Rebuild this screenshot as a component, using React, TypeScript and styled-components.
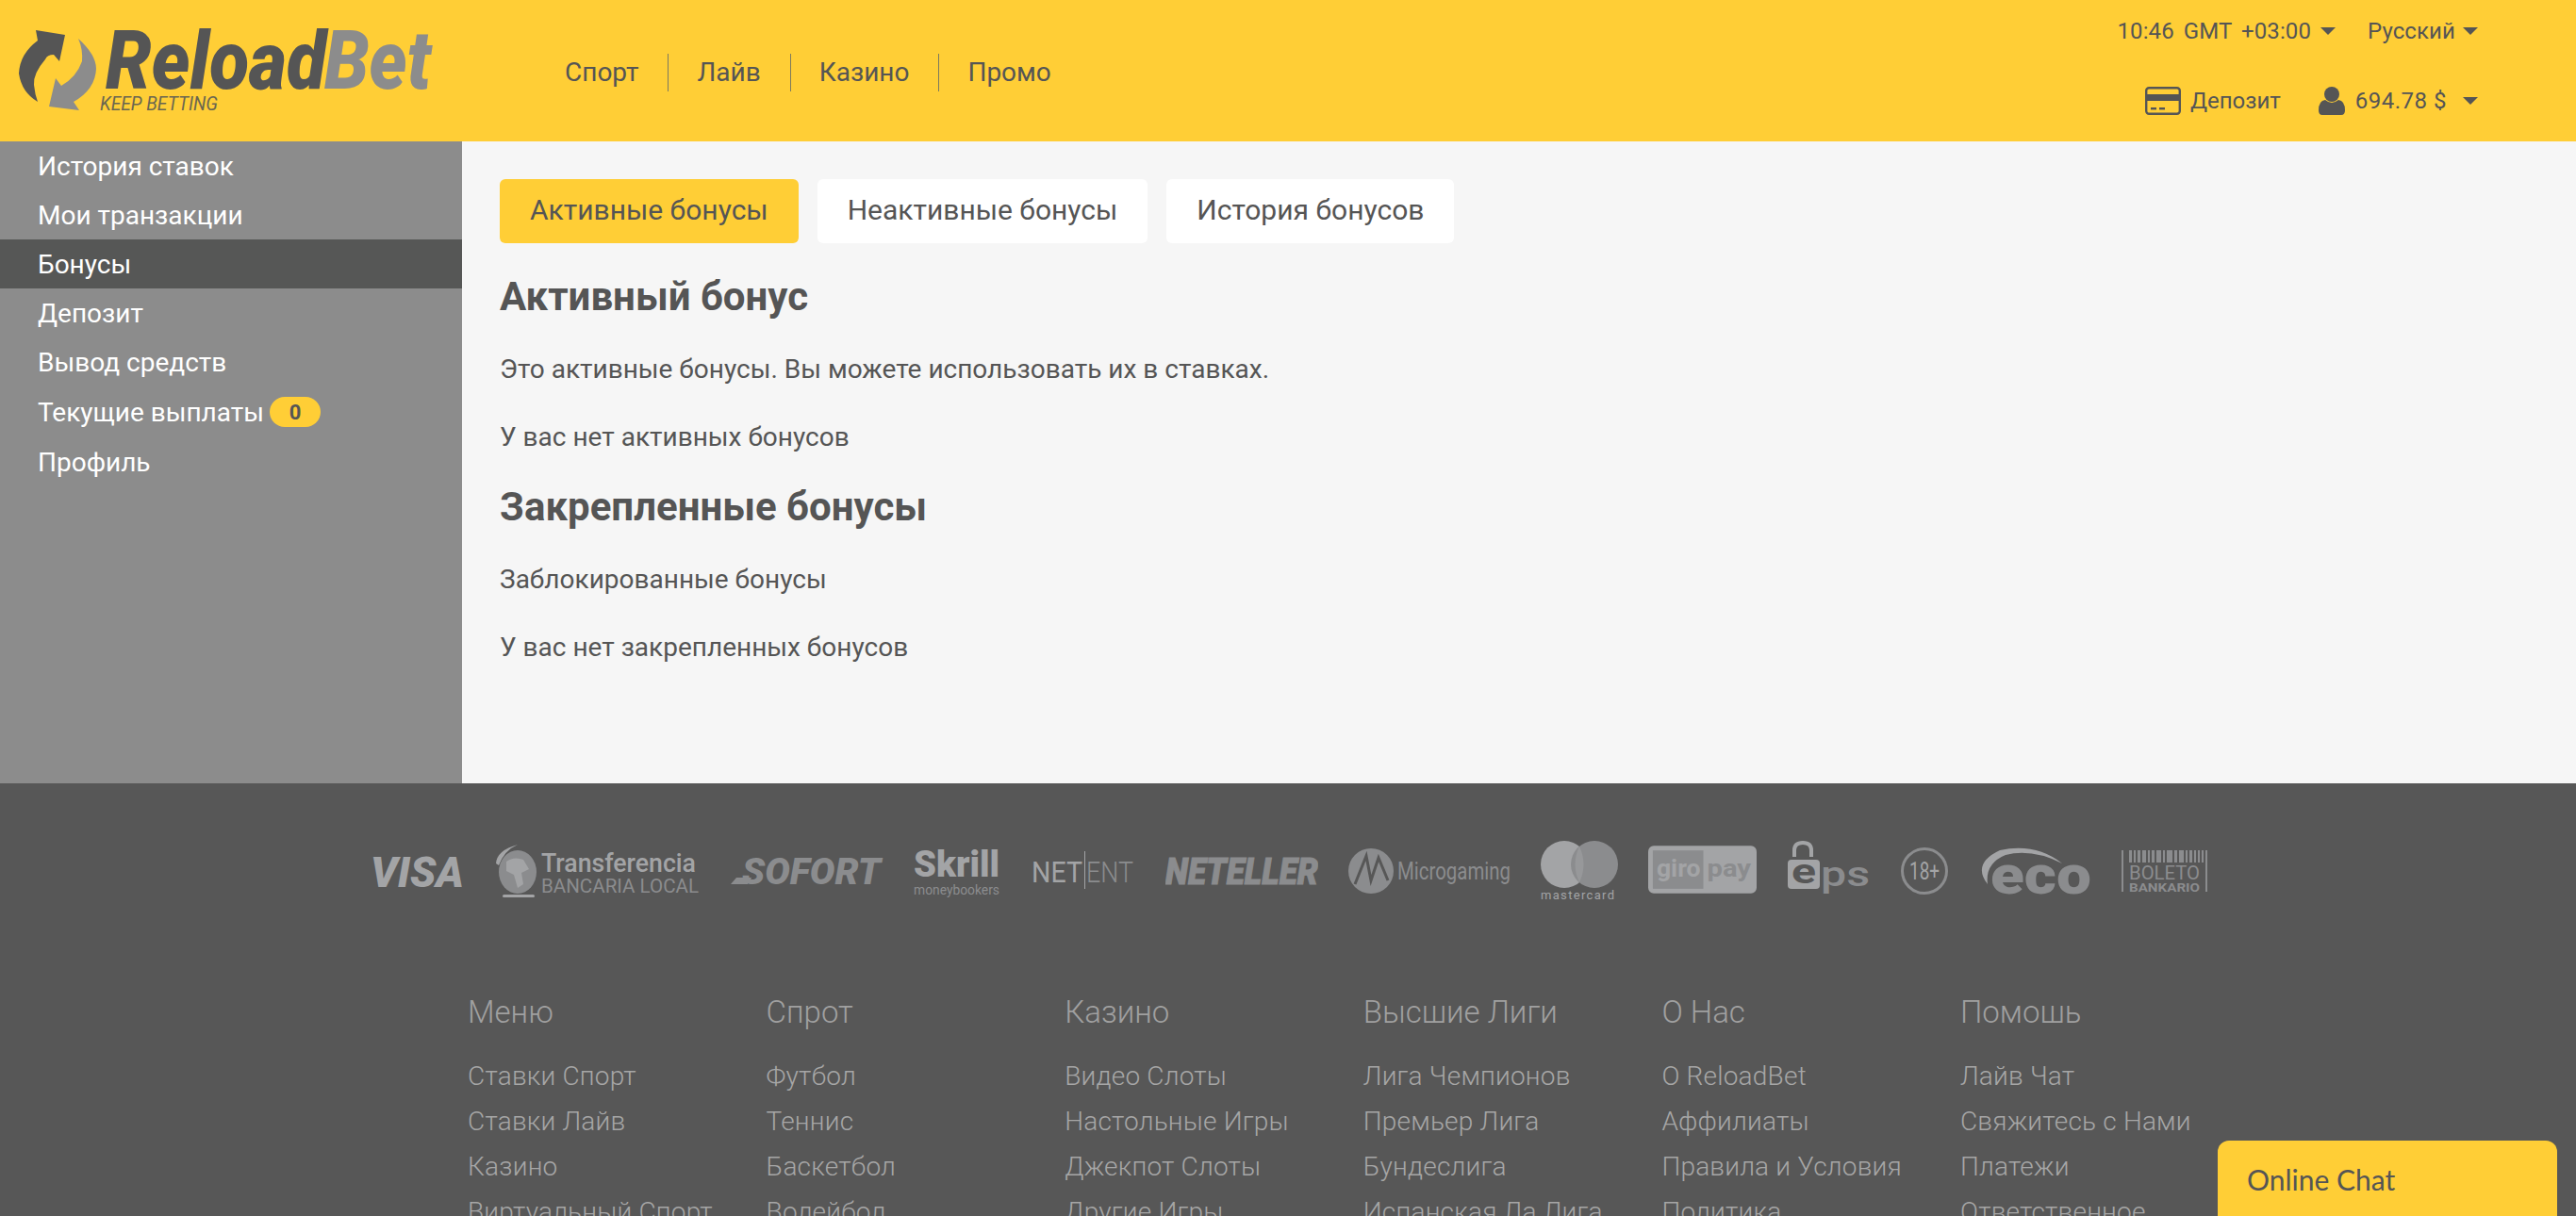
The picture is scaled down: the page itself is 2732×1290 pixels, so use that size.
import styled, { createGlobalStyle } from "styled-components";

const GlobalStyle = createGlobalStyle`
  html, body {
    margin: 0;
    height: 100%;
    overflow: hidden;
  }
  body {
    font-family: Roboto, "Noto Sans", sans-serif;
    background: #575757;
  }
  * {
    box-sizing: border-box;
  }
`;

const Page = styled.div`
  width: 2732px;
  height: 1290px;
  overflow: hidden;
  position: relative;
  display: flex;
  flex-direction: column;
`;

const Header = styled.header`
  height: 150px;
  flex: none;
  background: #ffce36;
  display: flex;
  color: #555;
`;

const LogoBox = styled.div`
  width: 599px;
  flex: none;
  padding: 30px 0 0 19px;
`;

const Nav = styled.nav`
  flex: 1;
  display: flex;
  align-items: center;
  font-size: 28px;
  height: 154px;
`;

const NavItem = styled.a`
  display: block;
  height: 40px;
  line-height: 40px;
  padding: 0 31px 0 30px;
  border-left: 1px solid #7d7a5e;
  white-space: nowrap;
  &:first-child {
    border-left: none;
    padding-left: 0;
  }
`;

const HeaderRight = styled.div`
  width: 560px;
  flex: none;
  font-size: 24px;
  padding-right: 104px;
  display: flex;
  flex-direction: column;
  align-items: flex-end;
  white-space: nowrap;
`;

const TopRow = styled.div`
  height: 66px;
  display: flex;
  align-items: center;
  letter-spacing: 0.1px;
`;

const BottomRow = styled.div`
  height: 42px;
  margin-top: 20px;
  display: flex;
  align-items: center;
`;

const Caret = styled.span<{ $gap: number }>`
  width: 0;
  height: 0;
  border-left: 8px solid transparent;
  border-right: 8px solid transparent;
  border-top: 8px solid #555;
  margin-left: ${(p) => p.$gap}px;
`;

const TimeText = styled.span`
  word-spacing: 4px;
`;

const Lang = styled.span`
  margin-left: 34px;
`;

const Deposit = styled.span`
  margin: 0 40px 0 10px;
`;

const Balance = styled.span`
  margin-left: 11px;
  letter-spacing: 0.5px;
`;

const Main = styled.div`
  height: 681px;
  flex: none;
  display: flex;
`;

const Sidebar = styled.aside`
  width: 490px;
  flex: none;
  background: #8c8c8c;
`;

const SideItem = styled.a<{ $active?: boolean }>`
  display: flex;
  align-items: center;
  min-height: 52px;
  padding-left: 40px;
  font-size: 28px;
  color: #fff;
  background: ${(p) => (p.$active ? "#565756" : "transparent")};
`;

const Badge = styled.span`
  width: 54px;
  height: 32px;
  margin: 11px 0 11px 6px;
  border-radius: 16px;
  background: #ffce36;
  color: #555;
  font-size: 22px;
  font-weight: 700;
  display: flex;
  align-items: center;
  justify-content: center;
`;

const Content = styled.main`
  flex: 1;
  background: #f6f6f6;
  padding: 40px 40px 0;
  color: #555;
`;

const Tabs = styled.div`
  display: flex;
  gap: 20px;
  margin-bottom: 34px;
`;

const Tab = styled.button<{ $active?: boolean }>`
  height: 68px;
  padding: 0 32px 3px;
  border: none;
  border-radius: 6px;
  font-family: inherit;
  font-size: 30px;
  color: #555;
  background: ${(p) => (p.$active ? "#ffce36" : "#fff")};
`;

const Heading = styled.h2`
  margin: 0;
  font-size: 42px;
  line-height: 46px;
  font-weight: 700;
`;

const Para = styled.p`
  margin: 0;
  font-size: 28px;
  line-height: 32px;
`;

const ActiveIntro = styled(Para)`
  margin-top: 38px;
`;

const ParaNext = styled(Para)`
  margin-top: 40px;
`;

const SecondHeading = styled(Heading)`
  margin-top: 35px;
`;

const Footer = styled.footer`
  flex: 1;
  background: #575757;
  padding-top: 61px;
`;

const LogoStrip = styled.div`
  display: flex;
  justify-content: center;
  gap: 32px;
  height: 64px;
`;

const LogoText = styled.text<{ $dark?: boolean }>`
  font-family: Roboto, sans-serif;
  fill: ${(p) => (p.$dark ? "#8b8c8e" : "#a3a4a6")};
`;

const Columns = styled.div`
  display: grid;
  grid-template-columns: repeat(6, 316.6px);
  padding: 99px 0 0 496px;
`;

const ColTitle = styled.div`
  font-size: 33px;
  line-height: 38px;
  font-weight: 300;
  color: #a0a0a0;
  margin-bottom: 25px;
`;

const ColLink = styled.a`
  display: block;
  font-size: 28px;
  letter-spacing: 0.2px;
  line-height: 48px;
  font-weight: 300;
  color: #a6a6a6;
  white-space: nowrap;
`;

const ChatTab = styled.div`
  position: absolute;
  left: 2352px;
  top: 1210px;
  width: 360px;
  height: 90px;
  padding: 23px 31px;
  border-radius: 12px 12px 0 0;
  background: #ffce36;
  color: #555;
  font-family: Lato, sans-serif;
  font-size: 30px;
  line-height: 36px;
`;

const Logo = () => (
  <svg width="450" height="92" viewBox="0 0 450 92">
    <path
      d="M19 2 L50 7 L44 35 L38 28 Q31 28 29 33 Q16 48 17 60 Q18 70 21 78 Q4 68 1 48 Q2 27 21 13 Z"
      fill="#555"
    />
    <path
      d="M64 11 Q83 28 83 43 Q82 65 59 78 L65 87 L33 83 L40 53 L46 61 Q62 52 68 35 Q69 22 64 11 Z"
      fill="#8c8c8c"
    />
    <text
      x="93"
      y="64"
      textLength="234"
      lengthAdjust="spacingAndGlyphs"
      fontFamily="Roboto"
      fontWeight="900"
      fontStyle="italic"
      fontSize="86"
      fill="#555"
    >
      Reload
    </text>
    <text
      x="325"
      y="64"
      textLength="113"
      lengthAdjust="spacingAndGlyphs"
      fontFamily="Roboto"
      fontWeight="900"
      fontStyle="italic"
      fontSize="86"
      fill="#8c8c8c"
    >
      Bet
    </text>
    <text
      x="87"
      y="87"
      textLength="125"
      lengthAdjust="spacingAndGlyphs"
      fontFamily="Roboto"
      fontWeight="400"
      fontStyle="italic"
      fontSize="21"
      fill="#6a6650"
    >
      KEEP BETTING
    </text>
  </svg>
);

const CardIcon = () => (
  <svg width="38" height="30" viewBox="0 0 38 30">
    <rect x="1.2" y="1.2" width="35.6" height="27.6" rx="3" fill="none" stroke="#555" strokeWidth="2.4" />
    <rect x="1" y="8" width="36" height="7" fill="#555" />
    <rect x="6" y="22" width="6" height="2.4" fill="#555" />
    <rect x="15" y="22" width="6" height="2.4" fill="#555" />
  </svg>
);

const UserIcon = () => (
  <svg width="28" height="30" viewBox="0 0 28 30">
    <circle cx="14" cy="8" r="8" fill="#555" />
    <path d="M0 25 Q0 15 7 14 Q14 20 21 14 Q28 15 28 25 Q28 30 24 30 L4 30 Q0 30 0 25 Z" fill="#555" />
  </svg>
);

const Visa = () => (
  <svg width="101" height="64" viewBox="0 0 101 64">
    <LogoText x="1" y="49" textLength="99" lengthAdjust="spacingAndGlyphs" fontSize="44" fontWeight="900" fontStyle="italic">
      VISA
    </LogoText>
  </svg>
);

const Transferencia = () => (
  <svg width="218" height="64" viewBox="0 0 218 64">
    <path d="M1 24 Q2 10 24 4 Q10 10 4 26 Z" fill="#a3a4a6" />
    <ellipse cx="24" cy="33" rx="20" ry="23" fill="#8b8c8e" />
    <path d="M12 22 Q20 16 30 20 L36 30 L28 34 L30 46 L24 50 L20 36 L12 32 Z" fill="#a3a4a6" />
    <rect x="8" y="57" width="34" height="3" rx="1.5" fill="#a3a4a6" />
    <LogoText x="49" y="33" textLength="164" lengthAdjust="spacingAndGlyphs" fontSize="28" fontWeight="500">
      Transferencia
    </LogoText>
    <LogoText $dark x="49" y="55" textLength="167" lengthAdjust="spacingAndGlyphs" fontSize="21">
      BANCARIA LOCAL
    </LogoText>
  </svg>
);

const Sofort = () => (
  <svg width="162" height="64" viewBox="0 0 162 64">
    <path d="M0 46 L6 39 H22 L18 46 Z" fill="#8b8c8e" />
    <LogoText $dark x="12" y="46" textLength="147" lengthAdjust="spacingAndGlyphs" fontSize="38" fontWeight="900" fontStyle="italic">
      SOFORT
    </LogoText>
  </svg>
);

const Skrill = () => (
  <svg width="93" height="64" viewBox="0 0 93 64">
    <LogoText x="0" y="38" textLength="91" lengthAdjust="spacingAndGlyphs" fontSize="38" fontWeight="900">
      Skrill
    </LogoText>
    <LogoText $dark x="0" y="57" textLength="91" lengthAdjust="spacingAndGlyphs" fontSize="15">
      moneybookers
    </LogoText>
  </svg>
);

const NetEnt = () => (
  <svg width="110" height="64" viewBox="0 0 110 64">
    <LogoText x="0" y="44" textLength="54" lengthAdjust="spacingAndGlyphs" fontSize="32">
      NET
    </LogoText>
    <rect x="56" y="11" width="1" height="40" fill="#a3a4a6" />
    <LogoText $dark x="58" y="44" textLength="50" lengthAdjust="spacingAndGlyphs" fontSize="32" fontWeight="300">
      ENT
    </LogoText>
  </svg>
);

const Neteller = () => (
  <svg width="162" height="64" viewBox="0 0 162 64">
    <LogoText $dark x="0" y="46" textLength="162" lengthAdjust="spacingAndGlyphs" fontSize="38" fontWeight="900" fontStyle="italic" stroke="#8b8c8e" strokeWidth="1">
      NETELLER
    </LogoText>
  </svg>
);

const Microgaming = () => (
  <svg width="172" height="64" viewBox="0 0 172 64">
    <ellipse cx="24" cy="32" rx="24" ry="24" fill="#8b8c8e" />
    <path d="M7 46 L19 16 L24 42 L32 18 L42 42" fill="none" stroke="#575757" strokeWidth="3" />
    <LogoText $dark x="52" y="41" textLength="120" lengthAdjust="spacingAndGlyphs" fontSize="25">
      Microgaming
    </LogoText>
  </svg>
);

const Mastercard = () => (
  <svg width="82" height="64" viewBox="0 0 82 64">
    <ellipse cx="25" cy="25" rx="25" ry="25" fill="#a3a4a6" />
    <ellipse cx="57" cy="25" rx="25" ry="25" fill="#8b8c8e" />
    <path d="M41 6 Q50 25 41 44 Q32 25 41 6 Z" fill="#97989a" />
    <LogoText x="0" y="62" textLength="78" lengthAdjust="spacing" fontSize="13">
      mastercard
    </LogoText>
  </svg>
);

const Giropay = () => (
  <svg width="115" height="64" viewBox="0 0 116 64">
    <rect x="0" y="5" width="116" height="51" rx="6" fill="#a3a4a6" />
    <rect x="5" y="10" width="54" height="41" fill="#8b8c8e" />
    <LogoText x="9" y="38" textLength="47" lengthAdjust="spacingAndGlyphs" fontSize="26" fontWeight="700">
      giro
    </LogoText>
    <LogoText $dark x="63" y="38" textLength="47" lengthAdjust="spacingAndGlyphs" fontSize="26" fontWeight="700">
      pay
    </LogoText>
  </svg>
);

const Eps = () => (
  <svg width="89" height="64" viewBox="0 0 89 64">
    <path d="M8 17 V10 Q8 2 17 2 Q26 2 26 10 V17" fill="none" stroke="#a3a4a6" strokeWidth="4" />
    <rect x="1" y="20" width="34" height="31" rx="4" fill="#a3a4a6" />
    <text x="5" y="45" textLength="26" lengthAdjust="spacingAndGlyphs" fontFamily="Roboto" fontSize="36" fontWeight="700" fill="#575757">
      e
    </text>
    <LogoText $dark x="36" y="48" textLength="52" lengthAdjust="spacingAndGlyphs" fontSize="36" fontWeight="500">
      ps
    </LogoText>
  </svg>
);

const Adults = () => (
  <svg width="51" height="64" viewBox="0 0 51 64">
    <ellipse cx="25" cy="32" rx="23.5" ry="23.5" fill="none" stroke="#8b8c8e" strokeWidth="3" />
    <LogoText x="9" y="41" textLength="32" lengthAdjust="spacingAndGlyphs" fontSize="25">
      18+
    </LogoText>
  </svg>
);

const Eco = () => (
  <svg width="119" height="64" viewBox="0 0 119 64">
    <path d="M9 46 Q-8 24 22 10 Q60 2 88 24 Q56 8 28 15 Q6 24 9 46 Z" fill="#a3a4a6" />
    <LogoText $dark x="12" y="56" textLength="107" lengthAdjust="spacingAndGlyphs" fontSize="58" fontWeight="900">
      eco
    </LogoText>
  </svg>
);

const barWidths = [3, 2, 3, 4, 2, 3, 5, 2, 6, 3, 5, 2, 3, 2, 2, 2];

const Boleto = () => {
  let x = 8;
  const bars = barWidths.map((w) => {
    const bar = { x, w };
    x += w + 2;
    return bar;
  });
  return (
    <svg width="91" height="64" viewBox="0 0 91 64">
      <rect x="0" y="10" width="2" height="44" fill="#8b8c8e" />
      <rect x="89" y="10" width="2" height="44" fill="#8b8c8e" />
      {bars.map((b) => (
        <rect key={b.x} x={b.x} y="10" width={b.w} height="13" fill="#8b8c8e" />
      ))}
      <LogoText $dark x="8" y="41" textLength="75" lengthAdjust="spacingAndGlyphs" fontSize="21">
        BOLETO
      </LogoText>
      <LogoText $dark x="8" y="54" textLength="75" lengthAdjust="spacingAndGlyphs" fontSize="13" fontWeight="700">
        BANKARIO
      </LogoText>
    </svg>
  );
};

const sideItems = [
  "История ставок",
  "Мои транзакции",
  "Бонусы",
  "Депозит",
  "Вывод средств",
];

const footerColumns = [
  { title: "Меню", links: ["Ставки Спорт", "Ставки Лайв", "Казино", "Виртуальный Спорт"] },
  { title: "Спрот", links: ["Футбол", "Теннис", "Баскетбол", "Волейбол"] },
  { title: "Казино", links: ["Видео Слоты", "Настольные Игры", "Джекпот Слоты", "Другие Игры"] },
  { title: "Высшие Лиги", links: ["Лига Чемпионов", "Премьер Лига", "Бундеслига", "Испанская Ла Лига"] },
  { title: "О Нас", links: ["О ReloadBet", "Аффилиаты", "Правила и Условия", "Политика"] },
  { title: "Помошь", links: ["Лайв Чат", "Свяжитесь с Нами", "Платежи", "Ответственное"] },
];

function App() {
  return (
    <Page>
      <GlobalStyle />
      <Header>
        <LogoBox>
          <Logo />
        </LogoBox>
        <Nav>
          <NavItem>Спорт</NavItem>
          <NavItem>Лайв</NavItem>
          <NavItem>Казино</NavItem>
          <NavItem>Промо</NavItem>
        </Nav>
        <HeaderRight>
          <TopRow>
            <TimeText>10:46 GMT +03:00</TimeText>
            <Caret $gap={10} />
            <Lang>Русский</Lang>
            <Caret $gap={8} />
          </TopRow>
          <BottomRow>
            <CardIcon />
            <Deposit>Депозит</Deposit>
            <UserIcon />
            <Balance>694.78 $</Balance>
            <Caret $gap={17} />
          </BottomRow>
        </HeaderRight>
      </Header>
      <Main>
        <Sidebar>
          {sideItems.map((item) => (
            <SideItem key={item} $active={item === "Бонусы"}>
              {item}
            </SideItem>
          ))}
          <SideItem>
            Текущие выплаты
            <Badge>0</Badge>
          </SideItem>
          <SideItem>Профиль</SideItem>
        </Sidebar>
        <Content>
          <Tabs>
            <Tab $active>Активные бонусы</Tab>
            <Tab>Неактивные бонусы</Tab>
            <Tab>История бонусов</Tab>
          </Tabs>
          <Heading>Активный бонус</Heading>
          <ActiveIntro>Это активные бонусы. Вы можете использовать их в ставках.</ActiveIntro>
          <ParaNext>У вас нет активных бонусов</ParaNext>
          <SecondHeading>Закрепленные бонусы</SecondHeading>
          <ActiveIntro>Заблокированные бонусы</ActiveIntro>
          <ParaNext>У вас нет закрепленных бонусов</ParaNext>
        </Content>
      </Main>
      <Footer>
        <LogoStrip>
          <Visa />
          <Transferencia />
          <Sofort />
          <Skrill />
          <NetEnt />
          <Neteller />
          <Microgaming />
          <Mastercard />
          <Giropay />
          <Eps />
          <Adults />
          <Eco />
          <Boleto />
        </LogoStrip>
        <Columns>
          {footerColumns.map((col) => (
            <div key={col.title}>
              <ColTitle>{col.title}</ColTitle>
              {col.links.map((link) => (
                <ColLink key={link}>{link}</ColLink>
              ))}
            </div>
          ))}
        </Columns>
      </Footer>
      <ChatTab>Online Chat</ChatTab>
    </Page>
  );
}

export default App;
